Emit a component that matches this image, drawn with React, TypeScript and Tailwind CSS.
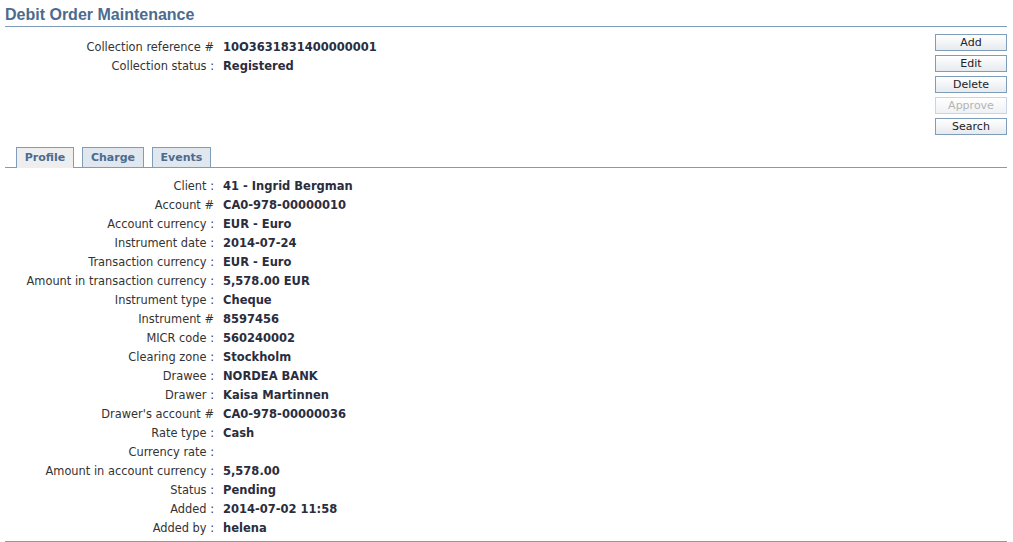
import React from "react";

const font = { fontFamily: '"DejaVu Sans", Verdana, Tahoma, sans-serif' };

const top: [string, string][] = [
  ["Collection reference #", "10O3631831400000001"],
  ["Collection status :", "Registered"],
];

const profile: [string, string][] = [
  ["Client :", "41 - Ingrid Bergman"],
  ["Account #", "CA0-978-00000010"],
  ["Account currency :", "EUR - Euro"],
  ["Instrument date :", "2014-07-24"],
  ["Transaction currency :", "EUR - Euro"],
  ["Amount in transaction currency :", "5,578.00\u00a0EUR"],
  ["Instrument type :", "Cheque"],
  ["Instrument #", "8597456"],
  ["MICR code :", "560240002"],
  ["Clearing zone :", "Stockholm"],
  ["Drawee :", "NORDEA BANK"],
  ["Drawer :", "Kaisa Martinnen"],
  ["Drawer's account #", "CA0-978-00000036"],
  ["Rate type :", "Cash"],
  ["Currency rate :", ""],
  ["Amount in account currency :", "5,578.00"],
  ["Status :", "Pending"],
  ["Added :", "2014-07-02 11:58"],
  ["Added by :", "helena"],
];

function Rows({ rows }: { rows: [string, string][] }) {
  return (
    <div className="grid grid-cols-[209px_1fr] gap-x-[9px]">
      {rows.map(([l, v]) => (
        <React.Fragment key={l}>
          <div className="h-[19px] whitespace-nowrap text-right text-[11.4px] leading-[19px] text-[#333333]">{l}</div>
          <div className="h-[19px] whitespace-nowrap text-[11.5px] font-bold leading-[19px] text-[#2a2d3e]">{v}</div>
        </React.Fragment>
      ))}
    </div>
  );
}

function Btn({ label, disabled }: { label: string; disabled?: boolean }) {
  return (
    <button
      className={
        disabled
          ? "h-[17px] w-[72px] border border-[#c9d5e2] bg-gradient-to-b from-white to-[#eef1f4] text-[11px] leading-[15px] text-[#b4b4b4]"
          : "h-[17px] w-[72px] border border-[#7f9db9] bg-gradient-to-b from-white to-[#e6eaee] text-[11px] leading-[15px] text-[#222222]"
      }
    >
      {label}
    </button>
  );
}

export default function App() {
  return (
    <div className="h-[542px] w-[1013px] bg-white pl-[5px] pr-[6px]" style={font}>
      <div
        className="h-[27px] border-b border-[#7f9db9] pt-[6px] text-[16px] font-bold leading-[18px] text-[#4b6b8f]"
        style={{ fontFamily: '"Liberation Sans", Arial, sans-serif' }}
      >
        Debit Order Maintenance
      </div>
      <div className="flex h-[121px] justify-between">
        <div className="pt-[11px]">
          <Rows rows={top} />
        </div>
        <div className="flex flex-col gap-[4px] pt-[7px]">
          <Btn label="Add" />
          <Btn label="Edit" />
          <Btn label="Delete" />
          <Btn label="Approve" disabled />
          <Btn label="Search" />
        </div>
      </div>
      <div className="flex h-[20px] items-end gap-[8px] border-b border-[#7f9db9] pl-[11px]">
        <div className="-mb-px h-[21px] w-[58px] border border-b-0 border-[#7f9db9] bg-[#eeeeee] text-center text-[11px] font-bold leading-[20px] text-[#4b6b8f]">
          Profile
        </div>
        <div className="h-[20px] w-[62px] border border-b-0 border-[#7f9db9] bg-[#e1e7ee] text-center text-[11px] font-bold leading-[19px] text-[#4b6b8f]">
          Charge
        </div>
        <div className="h-[20px] w-[59px] border border-b-0 border-[#7f9db9] bg-[#e1e7ee] text-center text-[11px] font-bold leading-[19px] text-[#4b6b8f]">
          Events
        </div>
      </div>
      <div className="h-[374px] border-b border-[#7f9db9] pt-[9px]">
        <Rows rows={profile} />
      </div>
    </div>
  );
}
